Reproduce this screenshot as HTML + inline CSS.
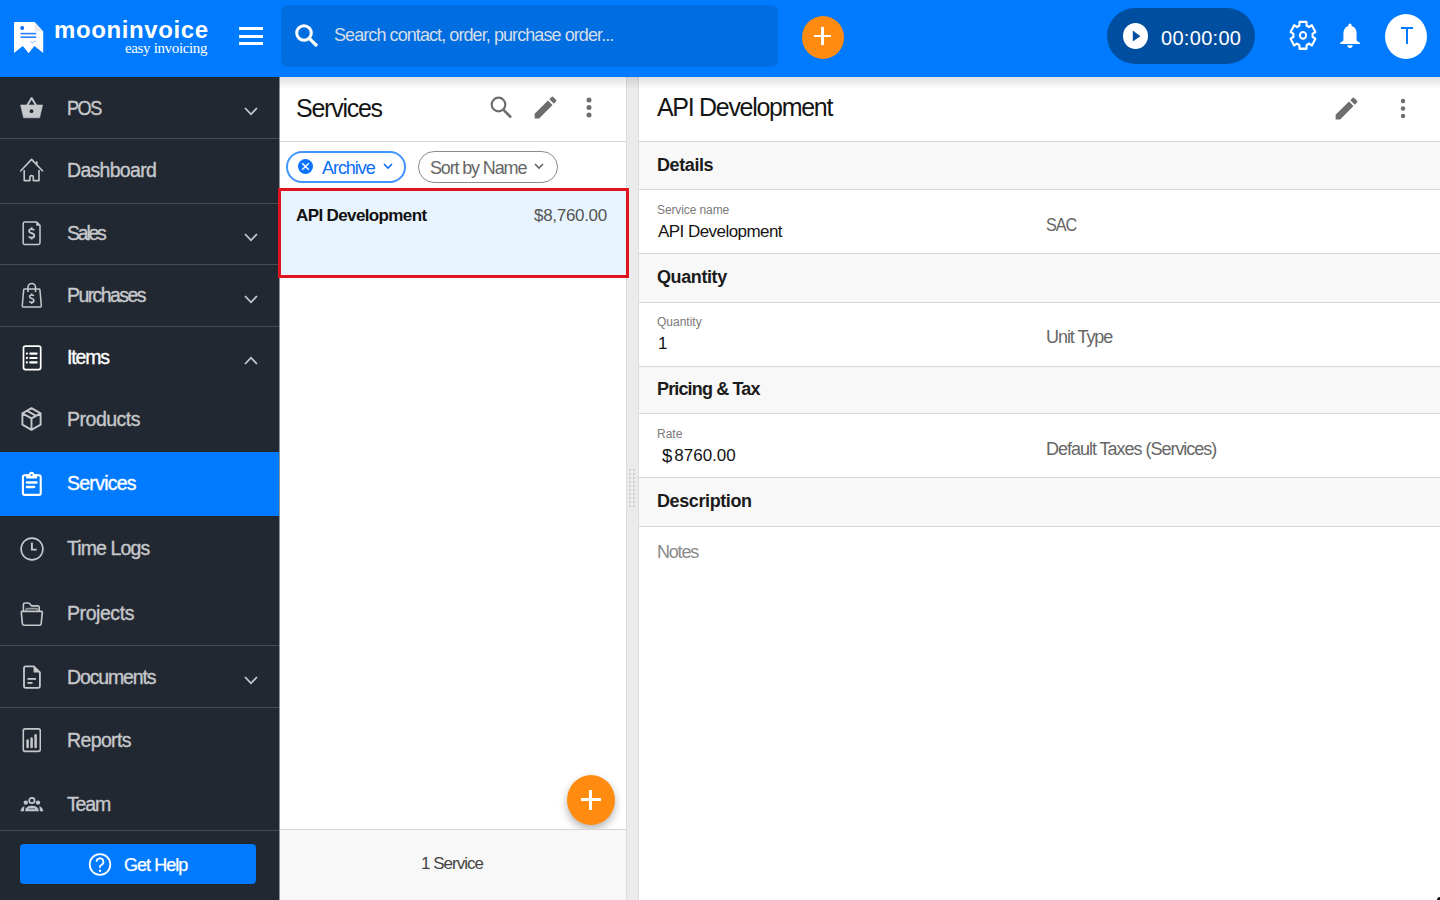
<!DOCTYPE html>
<html><head><meta charset="utf-8">
<style>
*{margin:0;padding:0;box-sizing:border-box}
html,body{width:1440px;height:900px;overflow:hidden;background:#fff;font-family:"Liberation Sans",sans-serif}
.a{position:absolute}
.t{position:absolute;white-space:nowrap;line-height:1}
#hdr{left:0;top:0;width:1440px;height:77px;background:#007aff;z-index:5}
#side{left:0;top:77px;width:279px;height:823px;background:#222831;overflow:hidden}
.sl{position:absolute;left:0;width:279px;height:1px;background:#474d55}
.st{position:absolute;left:67px;font-size:19.5px;color:#c6c8cc;white-space:nowrap;line-height:1;-webkit-text-stroke:0.35px currentColor}
.chev{position:absolute;left:244px}
#list{left:279px;top:77px;width:347px;height:823px;background:#fff;overflow:hidden}
#split{left:626px;top:77px;width:13px;height:823px;background:#ebebeb;border-left:1px solid #dcdcdc;border-right:1px solid #dcdcdc}
#det{left:639px;top:77px;width:801px;height:823px;background:#fff;overflow:hidden}
.sec{position:absolute;left:0;width:801px;background:#f8f8f8;border-top:1px solid #d6d6d6}
.row{position:absolute;left:0;width:801px;background:#fff;border-top:1px solid #d6d6d6}
.sech{position:absolute;left:18px;font-size:18px;font-weight:bold;color:#1b1b1b;line-height:1;white-space:nowrap;letter-spacing:-0.4px}
.lbl{position:absolute;left:18px;font-size:12px;color:#7a7a7a;line-height:1;white-space:nowrap}
.val{position:absolute;left:19px;font-size:17px;color:#141414;line-height:1;white-space:nowrap;letter-spacing:-0.55px}
.val2{position:absolute;left:407px;font-size:18px;color:#666;line-height:1;white-space:nowrap;letter-spacing:-0.9px}
</style></head><body>

<!-- HEADER -->
<div id="hdr" class="a">
  <!-- logo -->
  <svg class="a" style="left:14px;top:22px" width="30" height="32" viewBox="0 0 30 32">
    <path d="M1.2,0 H20.6 L29.2,9.6 V31 L20.4,24 L14.6,31.2 L8.8,24 L0,31 V1.2 Q0,0 1.2,0 Z" fill="#fff"/>
    <path d="M20.6,0 V9.6 H29.2" fill="#e9e9e9"/>
    <circle cx="8.2" cy="6" r="2" fill="#0a6cff"/>
    <rect x="6.5" y="10.8" width="15.8" height="1.6" fill="#2a7fff"/>
    <rect x="6.5" y="14.4" width="15.8" height="1.6" fill="#2a7fff"/>
    <path d="M16.5,20.5 q1,-2 1.5,0 q0.5,1 1.5,-0.5 q1,-0.5 2.5,-1" stroke="#6aa5ff" stroke-width="0.8" fill="none"/>
  </svg>
  <div class="t" style="left:54px;top:18px;font-size:24px;font-weight:bold;color:#fff;letter-spacing:0.6px">mooninvoice</div>
  <div class="t" style="left:125px;top:41px;font-family:'Liberation Serif',serif;font-size:15px;color:#fff;letter-spacing:-0.35px">easy invoicing</div>
  <!-- hamburger -->
  <div class="a" style="left:239px;top:27px;width:24px;height:3px;background:#fff"></div>
  <div class="a" style="left:239px;top:34.5px;width:24px;height:3px;background:#fff"></div>
  <div class="a" style="left:239px;top:42px;width:24px;height:3px;background:#fff"></div>
  <!-- search -->
  <div class="a" style="left:281px;top:5.2px;width:497px;height:61.6px;background:#006ee0;border-radius:7px"></div>
  <svg class="a" style="left:293px;top:22px" width="27" height="27" viewBox="0 0 27 27">
    <circle cx="11" cy="11" r="7.3" stroke="#fff" stroke-width="3" fill="none"/>
    <path d="M16.3,16.3 L24,24" stroke="#fff" stroke-width="3.2" stroke-linecap="butt"/>
  </svg>
  <div class="t" style="left:334px;top:26px;font-size:18px;color:#d6dde8;letter-spacing:-0.92px">Search contact, order, purchase order...</div>
  <!-- orange plus -->
  <div class="a" style="left:802px;top:16px;width:42px;height:43px;border-radius:50%;background:#ff8c10"></div>
  <div class="a" style="left:813.8px;top:34.7px;width:17.6px;height:2.6px;background:#fff"></div>
  <div class="a" style="left:821.4px;top:27.2px;width:2.6px;height:17.8px;background:#fff"></div>
  <!-- timer -->
  <div class="a" style="left:1107px;top:8px;width:148px;height:56px;border-radius:28px;background:#004ea0"></div>
  <div class="a" style="left:1123.4px;top:23.3px;width:25px;height:26px;border-radius:50%;background:#fff"></div>
  <svg class="a" style="left:1123.4px;top:23.3px" width="25" height="26" viewBox="0 0 25 26"><path d="M9.8,7.6 L17.4,13.2 L9.8,18.4 Z" fill="#004ea0"/></svg>
  <div class="t" style="left:1161px;top:28px;font-size:20px;color:#fff;letter-spacing:0.3px">00:00:00</div>
  <!-- gear -->
  <svg class="a" style="left:1288px;top:18.8px" width="30" height="32.7" viewBox="0 0 30 30" preserveAspectRatio="none">
    <path fill="none" stroke="#fff" stroke-width="2.1" stroke-linejoin="round" d="M11.40,6.10 L11.47,2.70 L18.53,2.70 L18.60,6.10 A9.6,9.6 0 0 1 20.91,7.44 L23.89,5.79 L27.42,11.90 L24.51,13.66 A9.6,9.6 0 0 1 24.51,16.34 L27.42,18.10 L23.89,24.21 L20.91,22.56 A9.6,9.6 0 0 1 18.60,23.90 L18.53,27.30 L11.47,27.30 L11.40,23.90 A9.6,9.6 0 0 1 9.09,22.56 L6.11,24.21 L2.58,18.10 L5.49,16.34 A9.6,9.6 0 0 1 5.49,13.66 L2.58,11.90 L6.11,5.79 L9.09,7.44 A9.6,9.6 0 0 1 11.40,6.10 Z"/>
    <circle cx="15" cy="15" r="3.1" fill="none" stroke="#fff" stroke-width="2"/>
  </svg>
  <!-- bell -->
  <svg class="a" style="left:1340px;top:23px" width="20" height="26" viewBox="0 0 20 26">
    <path fill="#fff" d="M10,0.5 a1.6,1.6 0 0 1 1.6,1.6 v1 C15,4 16.6,7 16.6,10.5 V17.5 L20,20 V21 H0 V20 L3.4,17.5 V10.5 C3.4,7 5,4 8.4,3.1 v-1 A1.6,1.6 0 0 1 10,0.5 Z"/>
    <path fill="#fff" d="M7.4,22.3 H12.6 A2.6,2.6 0 0 1 7.4,22.3 Z"/>
  </svg>
  <!-- avatar -->
  <div class="a" style="left:1385px;top:14px;width:42px;height:45px;border-radius:50%;background:#fff"></div>
  <div class="a" style="left:1400.5px;top:27px;width:12.5px;height:2px;background:#007aff"></div>
  <div class="a" style="left:1405.7px;top:27px;width:2.1px;height:17px;background:#007aff"></div>
</div>

<!-- SIDEBAR -->
<div id="side" class="a">
  <!-- POS -->
  <svg class="a" style="left:20px;top:20px" width="24" height="22" viewBox="0 0 24 22">
    <path d="M0.6,8 H22.6 L19.6,20.8 H3.6 Z" fill="#c6c8cc" stroke="#c6c8cc" stroke-width="0.6" stroke-linejoin="round"/>
    <path d="M7.2,8.5 L11.6,1 L16.2,8.5" stroke="#c6c8cc" stroke-width="1.9" fill="none" stroke-linejoin="round"/>
    <circle cx="11.5" cy="14.2" r="1.9" fill="#222831"/>
  </svg>
  <div class="st" style="top:22px;letter-spacing:-1.6px;transform:scaleX(0.93);transform-origin:0 0">POS</div>
  <svg class="chev" style="top:30px" width="14" height="9" viewBox="0 0 14 9"><path d="M1,1 L7,7.3 L13,1" stroke="#c6c8cc" stroke-width="1.8" fill="none"/></svg>
  <div class="sl" style="top:61px"></div>
  <!-- Dashboard -->
  <svg class="a" style="left:20px;top:81px" width="24" height="25" viewBox="0 0 24 25">
    <path d="M0.8,12.8 L11.6,1.4 L22.4,12.8" stroke="#c6c8cc" stroke-width="1.6" fill="none" stroke-linecap="round" stroke-linejoin="round"/>
    <path d="M4.2,12 V22.6 H9.9 V18.8 Q9.9,17.6 11.6,17.6 Q13.3,17.6 13.3,18.8 V22.6 H19 V12" stroke="#c6c8cc" stroke-width="1.6" fill="none" stroke-linejoin="round"/>
    <path d="M16.8,3.2 V6.6" stroke="#c6c8cc" stroke-width="1.6"/>
  </svg>
  <div class="st" style="top:84px;letter-spacing:-0.70px">Dashboard</div>
  <div class="sl" style="top:126px"></div>
  <!-- Sales -->
  <svg class="a" style="left:22px;top:143px" width="20" height="26" viewBox="0 0 20 26">
    <path d="M2.9,1.9 H14.6 L18,5.4 V22.8 Q18,24.5 16.3,24.5 H2.9 Q1.2,24.5 1.2,22.8 V3.6 Q1.2,1.9 2.9,1.9 Z" stroke="#c6c8cc" stroke-width="1.5" fill="none"/>
    <path d="M14.2,1.9 L18,5.7 H14.2 Z" fill="#c6c8cc"/>
    <path d="M12.1,10.4 Q11.5,9.1 9.6,9.1 Q7.1,9.1 7.1,11.1 Q7.1,12.6 9.6,13.2 Q12.3,13.8 12.3,15.7 Q12.3,17.7 9.6,17.7 Q7.5,17.7 6.9,16.3 M9.6,7.2 V9.1 M9.6,17.7 V19.6" stroke="#c6c8cc" stroke-width="1.8" fill="none"/>
  </svg>
  <div class="st" style="top:147px;letter-spacing:-2.23px">Sales</div>
  <svg class="chev" style="top:156px" width="14" height="9" viewBox="0 0 14 9"><path d="M1,1 L7,7.3 L13,1" stroke="#c6c8cc" stroke-width="1.8" fill="none"/></svg>
  <div class="sl" style="top:187px"></div>
  <!-- Purchases -->
  <svg class="a" style="left:21px;top:205px" width="22" height="27" viewBox="0 0 22 27">
    <path d="M3.6,6.9 H18 Q18.8,6.9 18.9,7.7 L20.3,23.4 Q20.4,25.1 18.7,25.1 H2.9 Q1.2,25.1 1.3,23.4 L2.7,7.7 Q2.8,6.9 3.6,6.9 Z" stroke="#c6c8cc" stroke-width="1.5" fill="none"/>
    <path d="M7,10 V5.3 A3.75,3.75 0 0 1 14.5,5.3 V10" stroke="#c6c8cc" stroke-width="1.6" fill="none"/>
    <path d="M12.8,14 Q12.3,13 10.7,13 Q8.6,13 8.6,14.7 Q8.6,16 10.7,16.5 Q12.9,17 12.9,18.6 Q12.9,20.4 10.7,20.4 Q8.9,20.4 8.4,19.2 M10.7,11.5 V13 M10.7,20.4 V21.9" stroke="#c6c8cc" stroke-width="1.6" fill="none"/>
  </svg>
  <div class="st" style="top:209px;letter-spacing:-1.58px">Purchases</div>
  <svg class="chev" style="top:218px" width="14" height="9" viewBox="0 0 14 9"><path d="M1,1 L7,7.3 L13,1" stroke="#c6c8cc" stroke-width="1.8" fill="none"/></svg>
  <div class="sl" style="top:249px"></div>
  <!-- Items -->
  <svg class="a" style="left:22px;top:268px" width="20" height="26" viewBox="0 0 20 26">
    <rect x="1.5" y="1.1" width="17.2" height="23.5" rx="2" stroke="#fff" stroke-width="1.7" fill="none"/>
    <circle cx="4.9" cy="8.6" r="1.15" fill="#fff"/><circle cx="4.9" cy="13" r="1.15" fill="#fff"/><circle cx="4.9" cy="17.4" r="1.15" fill="#fff"/>
    <path d="M8.3,8.6 H14.6 M8.3,13 H14.6 M8.3,17.4 H14.6" stroke="#fff" stroke-width="2.2" stroke-linecap="round"/>
  </svg>
  <div class="st" style="top:271px;color:#fff;letter-spacing:-1.15px">Items</div>
  <svg class="chev" style="top:279px" width="14" height="9" viewBox="0 0 14 9"><path d="M1,8 L7,1.7 L13,8" stroke="#c6c8cc" stroke-width="1.8" fill="none"/></svg>
  <!-- Products -->
  <svg class="a" style="left:20.6px;top:330px" width="21" height="24" viewBox="0 0 21 24">
    <path d="M10.5,1.2 L19.6,6.3 V17.7 L10.5,22.8 L1.4,17.7 V6.3 Z M1.4,6.3 L10.5,11.4 L19.6,6.3 M10.5,11.4 V22.8 M5.9,3.7 L15.1,8.9" stroke="#c6c8cc" stroke-width="1.9" fill="none" stroke-linejoin="round"/>
  </svg>
  <div class="st" style="top:333px;letter-spacing:-0.49px">Products</div>
  <!-- Services active -->
  <div class="a" style="left:0;top:375px;width:279px;height:64px;background:#007aff"></div>
  <svg class="a" style="left:21px;top:394px" width="22" height="26" viewBox="0 0 22 26">
    <rect x="1.9" y="4.3" width="17.8" height="19.6" rx="1.6" stroke="#fff" stroke-width="2.1" fill="none"/>
    <path d="M5,3.3 H16.2 V6.4 Q16.2,7.5 15.1,7.5 H6.1 Q5,7.5 5,6.4 Z" fill="#fff"/>
    <circle cx="10.6" cy="3.5" r="2.7" fill="#fff"/>
    <circle cx="10.6" cy="4" r="1" fill="#007aff"/>
    <path d="M5.8,11.5 H15.6 M5.8,16 H13.2" stroke="#fff" stroke-width="2.3" stroke-linecap="round"/>
  </svg>
  <div class="st" style="top:397px;color:#fff;letter-spacing:-0.74px">Services</div>
  <!-- Time Logs -->
  <svg class="a" style="left:19.6px;top:459.8px" width="24" height="24" viewBox="0 0 24 24">
    <circle cx="12" cy="12" r="10.9" stroke="#c6c8cc" stroke-width="1.6" fill="none"/>
    <path d="M11.9,5.6 V12.6 H16.7" stroke="#c6c8cc" stroke-width="1.9" fill="none"/>
  </svg>
  <div class="st" style="top:462px;letter-spacing:-0.89px">Time Logs</div>
  <!-- Projects -->
  <svg class="a" style="left:20px;top:524px" width="24" height="26" viewBox="0 0 24 26">
    <path d="M3.4,10.2 V3.6 Q3.4,2 5,2 H8.3 Q9.1,2 9.7,2.7 L11.6,4.9 H17.6 Q19.2,4.9 19.2,6.5 V10" stroke="#c6c8cc" stroke-width="1.6" fill="none"/>
    <path d="M6,9.6 Q6,7.6 7.8,7.6 H16 Q17.6,7.6 17.6,9.6" stroke="#9a9ea4" stroke-width="1.6" fill="none"/>
    <path d="M2,10.4 H21.6 Q22.4,10.4 22.3,11.3 L21.2,22.6 Q21,24.3 19.4,24.3 H4.2 Q2.6,24.3 2.4,22.6 L1.3,11.3 Q1.2,10.4 2,10.4 Z" stroke="#c6c8cc" stroke-width="1.6" fill="none"/>
  </svg>
  <div class="st" style="top:527px;letter-spacing:-0.43px">Projects</div>
  <div class="sl" style="top:568px"></div>
  <!-- Documents -->
  <svg class="a" style="left:23px;top:588px" width="18" height="24" viewBox="0 0 18 24">
    <path d="M2.8,1.3 H10.8 L16.9,7.4 V21.1 Q16.9,22.9 15.1,22.9 H2.8 Q1,22.9 1,21.1 V3.1 Q1,1.3 2.8,1.3 Z" stroke="#c6c8cc" stroke-width="1.8" fill="none"/>
    <path d="M10.6,1.3 L16.9,7.6 H10.6 Z" fill="#c6c8cc"/>
    <rect x="4.5" y="13" width="8.5" height="1.8" fill="#c6c8cc"/>
    <rect x="4.5" y="17" width="5" height="1.8" fill="#c6c8cc"/>
  </svg>
  <div class="st" style="top:591px;letter-spacing:-1.14px">Documents</div>
  <svg class="chev" style="top:599px" width="14" height="9" viewBox="0 0 14 9"><path d="M1,1 L7,7.3 L13,1" stroke="#c6c8cc" stroke-width="1.8" fill="none"/></svg>
  <div class="sl" style="top:630px"></div>
  <!-- Reports -->
  <svg class="a" style="left:22px;top:651px" width="19" height="25" viewBox="0 0 19 25">
    <rect x="1.3" y="0.9" width="17" height="22.5" rx="1.8" stroke="#c6c8cc" stroke-width="1.6" fill="none"/>
    <path d="M5.6,12.5 V18.9 M9.6,10.5 V18.9 M13.6,7.3 V18.9" stroke="#c6c8cc" stroke-width="2.5" stroke-linecap="round"/>
  </svg>
  <div class="st" style="top:654px;letter-spacing:-0.63px">Reports</div>
  <!-- Team -->
  <svg class="a" style="left:20px;top:720px" width="24" height="16" viewBox="0 0 24 16">
    <circle cx="11.9" cy="3.5" r="2.7" stroke="#bcc5cf" stroke-width="1.8" fill="none"/>
    <circle cx="5.8" cy="5.6" r="2.2" fill="#bcc5cf"/>
    <circle cx="18" cy="5.6" r="2.2" fill="#bcc5cf"/>
    <path d="M5,14.3 Q5.3,8.8 11.9,8.8 Q18.5,8.8 18.8,14.3 Z" fill="#bcc5cf"/>
    <rect x="8.6" y="11.3" width="6.6" height="1" fill="#5b6b7c"/>
    <path d="M0.6,14.3 Q0.9,10.2 4.4,9.2 L3.9,14.3 Z" fill="#bcc5cf"/>
    <path d="M23.2,14.3 Q22.9,10.2 19.4,9.2 L19.9,14.3 Z" fill="#bcc5cf"/>
  </svg>
  <div class="st" style="top:718px;letter-spacing:-1.13px">Team</div>
  <div class="sl" style="top:753px"></div>
  <!-- Get Help -->
  <div class="a" style="left:20px;top:767px;width:236px;height:40px;border-radius:4px;background:#007aff"></div>
  <svg class="a" style="left:88px;top:776px" width="24" height="24" viewBox="0 0 24 24">
    <circle cx="12" cy="11.5" r="10.3" stroke="#fff" stroke-width="1.8" fill="none"/>
    <path d="M8.6,8.8 A3.4,3.4 0 1 1 13.2,12 Q12,12.6 12,14 V14.8" stroke="#fff" stroke-width="1.8" fill="none"/>
    <circle cx="12" cy="17.7" r="1.2" fill="#fff"/>
  </svg>
  <div class="t" style="left:124px;top:779px;font-size:18px;color:#fff;letter-spacing:-0.95px;-webkit-text-stroke:0.25px #fff">Get Help</div>
</div>

<!-- LIST PANEL -->
<div id="list" class="a">
  <div class="t" style="left:17px;top:19px;font-size:25px;color:#151515;letter-spacing:-1.25px">Services</div>
  <svg class="a" style="left:211px;top:19px" width="22" height="23" viewBox="0 0 22 23">
    <circle cx="8.5" cy="8.5" r="6.8" stroke="#6d6d6d" stroke-width="2.2" fill="none"/>
    <path d="M13.5,13.8 L21,21.5" stroke="#6d6d6d" stroke-width="2.6"/>
  </svg>
  <svg class="a" style="left:252px;top:16.3px" width="29" height="29" viewBox="0 0 24 24">
    <path fill="#6d6d6d" d="M3,17.25 V21 H6.75 L17.81,9.94 L14.06,6.19 Z M20.71,7.04 a1,1 0 0 0 0,-1.41 l-2.34,-2.34 a1,1 0 0 0 -1.41,0 l-1.83,1.83 l3.75,3.75 Z"/>
  </svg>
  <svg class="a" style="left:306px;top:20px" width="8" height="21" viewBox="0 0 8 21">
    <circle cx="4" cy="3" r="2.5" fill="#6d6d6d"/><circle cx="4" cy="10.5" r="2.5" fill="#6d6d6d"/><circle cx="4" cy="18" r="2.5" fill="#6d6d6d"/>
  </svg>
  <div class="a" style="left:0;top:64px;width:347px;height:1px;background:#d6d6d6"></div>
  <!-- chips -->
  <div class="a" style="left:7px;top:74px;width:120px;height:32px;border-radius:16px;border:2px solid #4096ff"></div>
  <svg class="a" style="left:19px;top:82px" width="15" height="15" viewBox="0 0 15 15">
    <circle cx="7.5" cy="7.5" r="7.5" fill="#0a72ff"/>
    <path d="M4.2,4.2 L10.8,10.8 M10.8,4.2 L4.2,10.8" stroke="#fff" stroke-width="1.5"/>
  </svg>
  <div class="t" style="left:43px;top:82px;font-size:18px;color:#0a6cf5;letter-spacing:-1.05px">Archive</div>
  <svg class="a" style="left:104px;top:86px" width="10" height="7" viewBox="0 0 10 7"><path d="M1,1 L5,5 L9,1" stroke="#0a6cf5" stroke-width="1.6" fill="none"/></svg>
  <div class="a" style="left:139px;top:74px;width:140px;height:32px;border-radius:16px;border:1.5px solid #8c8c8c"></div>
  <div class="t" style="left:151px;top:82px;font-size:18px;color:#666;letter-spacing:-1.15px">Sort by Name</div>
  <svg class="a" style="left:255px;top:86px" width="10" height="7" viewBox="0 0 10 7"><path d="M1,1 L5,5 L9,1" stroke="#666" stroke-width="1.6" fill="none"/></svg>
  <!-- selected item -->
  <div class="a" style="left:0;top:111px;width:347px;height:90px;background:#e8f4fd"></div>
  <div class="t" style="left:17px;top:130px;font-size:17px;font-weight:bold;color:#111;letter-spacing:-0.62px">API Development</div>
  <div class="t" style="left:255px;top:130px;font-size:17px;color:#555;letter-spacing:-0.3px">$8,760.00</div>
  <!-- fab -->
  <div class="a" style="left:288px;top:698px;width:48px;height:50px;border-radius:50%;background:#ff8c10;box-shadow:0 4px 9px rgba(0,0,0,0.3)"></div>
  <div class="a" style="left:302px;top:721.3px;width:19.5px;height:3px;background:#fff"></div>
  <div class="a" style="left:310.3px;top:713px;width:3px;height:19.5px;background:#fff"></div>
  <!-- footer -->
  <div class="a" style="left:0;top:752px;width:347px;height:71px;background:#f8f8f8;border-top:1px solid #d4d4d4"></div>
  <div class="t" style="left:142px;top:778px;font-size:17px;color:#444;letter-spacing:-1px">1 Service</div>
</div>

<!-- SPLITTER -->
<div id="split" class="a"></div>
<div class="a" style="left:278px;top:187.5px;width:351px;height:90.5px;border:3.5px solid #e0141e;z-index:3"></div>
<svg class="a" style="left:629px;top:469px" width="7" height="40" viewBox="0 0 7 40">
  <g fill="#cfcfcf">
    <rect x="0" y="0" width="2" height="2"/><rect x="4" y="0" width="2" height="2"/>
    <rect x="0" y="4" width="2" height="2"/><rect x="4" y="4" width="2" height="2"/>
    <rect x="0" y="8" width="2" height="2"/><rect x="4" y="8" width="2" height="2"/>
    <rect x="0" y="12" width="2" height="2"/><rect x="4" y="12" width="2" height="2"/>
    <rect x="0" y="16" width="2" height="2"/><rect x="4" y="16" width="2" height="2"/>
    <rect x="0" y="20" width="2" height="2"/><rect x="4" y="20" width="2" height="2"/>
    <rect x="0" y="24" width="2" height="2"/><rect x="4" y="24" width="2" height="2"/>
    <rect x="0" y="28" width="2" height="2"/><rect x="4" y="28" width="2" height="2"/>
    <rect x="0" y="32" width="2" height="2"/><rect x="4" y="32" width="2" height="2"/>
    <rect x="0" y="36" width="2" height="2"/><rect x="4" y="36" width="2" height="2"/>
  </g>
</svg>

<!-- DETAIL PANEL -->
<div id="det" class="a">
  <div class="t" style="left:18px;top:18px;font-size:25px;color:#151515;letter-spacing:-1.3px">API Development</div>
  <svg class="a" style="left:693px;top:16.5px" width="29" height="29" viewBox="0 0 24 24">
    <path fill="#6d6d6d" d="M3,17.25 V21 H6.75 L17.81,9.94 L14.06,6.19 Z M20.71,7.04 a1,1 0 0 0 0,-1.41 l-2.34,-2.34 a1,1 0 0 0 -1.41,0 l-1.83,1.83 l3.75,3.75 Z"/>
  </svg>
  <svg class="a" style="left:760px;top:21px" width="8" height="21" viewBox="0 0 8 21">
    <circle cx="4" cy="3" r="2.2" fill="#6d6d6d"/><circle cx="4" cy="10.5" r="2.2" fill="#6d6d6d"/><circle cx="4" cy="18" r="2.2" fill="#6d6d6d"/>
  </svg>

  <div class="sec" style="top:64px;height:49px"></div>
  <div class="sech" style="top:79px">Details</div>
  <div class="row" style="top:112px;height:64px"></div>
  <div class="lbl" style="top:127px;letter-spacing:-0.1px">Service name</div>
  <div class="val" style="top:145.5px">API Development</div>
  <div class="val2" style="top:139px;letter-spacing:-1.2px;transform:scaleX(0.9);transform-origin:0 0">SAC</div>

  <div class="sec" style="top:176px;height:49px"></div>
  <div class="sech" style="top:191px">Quantity</div>
  <div class="row" style="top:225px;height:64px"></div>
  <div class="lbl" style="top:239px">Quantity</div>
  <div class="val" style="top:257.5px">1</div>
  <div class="val2" style="top:251px;letter-spacing:-1.05px">Unit Type</div>

  <div class="sec" style="top:289px;height:48px"></div>
  <div class="sech" style="top:303px;letter-spacing:-0.85px">Pricing &amp; Tax</div>
  <div class="row" style="top:336px;height:64px"></div>
  <div class="lbl" style="top:351px">Rate</div>
  <div class="val" style="left:23px;top:369px;letter-spacing:0"><span style="font-size:18.5px;position:relative;top:0.6px">$</span><span style="margin-left:2px">8760.00</span></div>
  <div class="val2" style="top:363px;letter-spacing:-1.02px">Default Taxes (Services)</div>

  <div class="sec" style="top:400px;height:49px"></div>
  <div class="sech" style="top:415px">Description</div>
  <div class="row" style="top:449px;height:400px"></div>
  <div class="t" style="left:18px;top:466px;font-size:18px;color:#8a8a8a;letter-spacing:-1.2px">Notes</div>
</div>

<div class="a" style="left:279px;top:77px;width:1px;height:823px;background:#8e9196;z-index:2"></div>
<div class="a" style="left:1437px;top:897px;width:3px;height:3px;background:#111;border-top-left-radius:3px;z-index:9"></div>
<!-- header shadow -->
<div class="a" style="left:279px;top:77px;width:1161px;height:12px;background:linear-gradient(rgba(0,0,0,0.12),rgba(0,0,0,0));z-index:4"></div>
</body></html>
